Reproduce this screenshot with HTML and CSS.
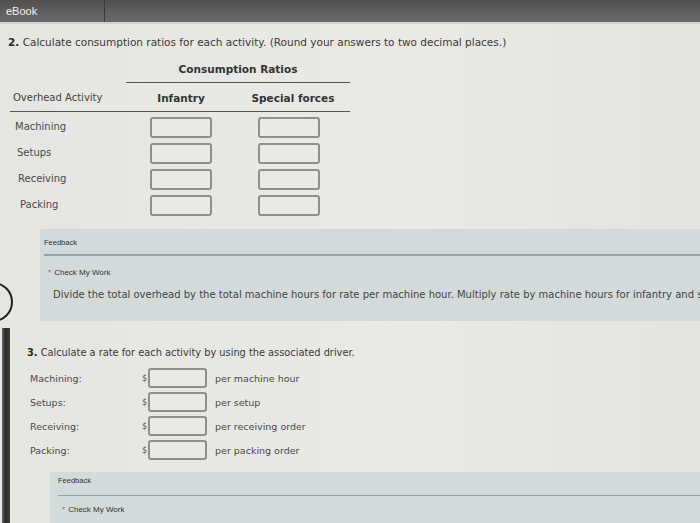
FILE: index.html
```html
<!DOCTYPE html>
<html lang="en">
<head>
    <meta charset="UTF-8">
    <title>eBook</title>
    <link rel="stylesheet" href="styles.css">
</head>
<body>
<div class="topbar">
    <div class="tab">eBook</div>
</div>

<div class="page">
    <p class="question"><b>2.</b> Calculate consumption ratios for each activity. (Round your answers to two decimal places.)</p>

    <div class="ratios-head">
        <div class="group-head">Consumption Ratios</div>
        <div class="col-head first">Overhead Activity</div>
        <div class="col-head">Infantry</div>
        <div class="col-head">Special forces</div>
    </div>

    <div class="ratios-body">
        <div class="activity">Machining</div>
        <div class="cell"><input type="text" class="box"></div>
        <div class="cell"><input type="text" class="box"></div>

        <div class="activity">Setups</div>
        <div class="cell"><input type="text" class="box"></div>
        <div class="cell"><input type="text" class="box"></div>

        <div class="activity">Receiving</div>
        <div class="cell"><input type="text" class="box"></div>
        <div class="cell"><input type="text" class="box"></div>

        <div class="activity">Packing</div>
        <div class="cell"><input type="text" class="box"></div>
        <div class="cell"><input type="text" class="box"></div>
    </div>

    <div class="feedback first-fb">
        <div class="fb-title">Feedback</div>
        <div class="fb-check"><span class="arrow">&#9660;</span> Check My Work</div>
        <p class="fb-text">Divide the total overhead by the total machine hours for rate per machine hour. Multiply rate by machine hours for infantry and special forces.</p>
    </div>

    <p class="question q3"><b>3.</b> Calculate a rate for each activity by using the associated driver.</p>

    <div class="rates">
        <div class="rate-label">Machining:</div>
        <div class="money">$<input type="text" class="box small"></div>
        <div class="unit">per machine hour</div>

        <div class="rate-label">Setups:</div>
        <div class="money">$<input type="text" class="box small"></div>
        <div class="unit">per setup</div>

        <div class="rate-label">Receiving:</div>
        <div class="money">$<input type="text" class="box small"></div>
        <div class="unit">per receiving order</div>

        <div class="rate-label">Packing:</div>
        <div class="money">$<input type="text" class="box small"></div>
        <div class="unit">per packing order</div>
    </div>

    <div class="feedback second-fb">
        <div class="fb-title">Feedback</div>
        <div class="fb-check"><span class="arrow">&#9660;</span> Check My Work</div>
    </div>
</div>

<div class="ring"></div>
<div class="bezel"></div>
</body>
</html>
```

FILE: styles.css
```css
body {
    margin: 0;
    height: 523px;
    overflow: hidden;
    background: linear-gradient(to right, #e5e5e1, #e9e9e5 60%, #e3e3df);
    font-family: "DejaVu Sans", Verdana, sans-serif;
    color: #3f3f3f;
    position: relative;
}

.topbar {
    height: 22px;
    background: linear-gradient(#505050, #6a6a6a);
    border-bottom: 2px solid #d2d2d0;
    display: flex;
}
.tab {
    width: 98px;
    padding-left: 6px;
    border-right: 1px solid #3a3a3a;
    color: #f2f2f2;
    font-family: "Liberation Sans", Arial, sans-serif;
    font-size: 11px;
    line-height: 22px;
}

.page {
    padding-top: 10px;
}

.question {
    margin: 0 0 0 8px;
    font-size: 10.5px;
    line-height: 16px;
    color: #3a3a3a;
}
.question b {
    color: #2a2a2a;
}

/* table of ratios */
.ratios-head {
    margin: 7px 0 0 10px;
    width: 340px;
    display: grid;
    grid-template-columns: 116px 110px 114px;
    grid-template-rows: 26px 29px;
}
.group-head {
    grid-column: 2 / 4;
    border-bottom: 1px solid #555;
    text-align: center;
    font-weight: bold;
    font-size: 10.5px;
    line-height: 24px;
    color: #333;
}
.col-head {
    border-bottom: 1px solid #555;
    text-align: center;
    font-weight: bold;
    font-size: 10.5px;
    line-height: 30px;
    color: #333;
}
.col-head.first {
    text-align: left;
    padding-left: 3px;
    font-weight: normal;
    font-size: 10px;
    color: #444;
}

.ratios-body {
    margin: 2px 0 0 10px;
    display: grid;
    grid-template-columns: 116px 110px 106px;
    grid-auto-rows: 26px;
}
.activity {
    padding-left: 5px;
    font-size: 10px;
    line-height: 26px;
    color: #4a4a4a;
}
.activity:nth-child(4) { padding-left: 7px; }
.activity:nth-child(7) { padding-left: 8px; }
.activity:nth-child(10) { padding-left: 10px; }
.cell {
    display: flex;
    align-items: center;
    justify-content: center;
}
.box {
    width: 62px;
    height: 21px;
    box-sizing: border-box;
    border: 2px solid #8f8f8f;
    border-radius: 3px;
    background: #e9e9e6;
    padding: 0;
}

/* feedback panels */
.feedback {
    background: #d3dad9;
    box-sizing: border-box;
    overflow: hidden;
}
.first-fb {
    margin: 11px 0 0 40px;
    height: 92px;
    padding: 8px 0 0 4px;
}
.fb-title {
    font-family: "Liberation Sans", Arial, sans-serif;
    font-size: 7.5px;
    line-height: 12px;
    color: #333;
    padding-bottom: 5px;
    border-bottom: 2px solid #9aa0a0;
}
.fb-check {
    font-family: "Liberation Sans", Arial, sans-serif;
    font-size: 8px;
    line-height: 12px;
    color: #333;
    margin-top: 9px;
    padding-left: 3px;
}
.arrow {
    font-size: 5px;
    color: #8a8a8a;
    vertical-align: 2px;
}
.fb-text {
    margin: 9px 0 0 9px;
    white-space: nowrap;
    font-size: 10px;
    line-height: 14px;
    color: #444;
}

.q3 {
    margin: 24px 0 0 27px;
    font-size: 9.8px;
}

.rates {
    margin: 5px 0 0 30px;
    display: grid;
    grid-template-columns: 112px 73px auto;
    grid-auto-rows: 24px;
    align-items: center;
}
.rate-label {
    font-size: 9.5px;
    color: #4a4a4a;
}
.money {
    display: flex;
    align-items: center;
    font-size: 8px;
    color: #555;
}
.box.small {
    width: 59px;
    height: 20px;
    margin-left: 1px;
}
.unit {
    font-size: 9.5px;
    color: #4a4a4a;
}

.second-fb {
    margin: 10px 0 0 50px;
    height: 60px;
    padding: 3px 0 0 8px;
}
.second-fb .fb-title {
    padding-bottom: 8px;
    border-bottom-width: 1px;
}
.second-fb .fb-check {
    margin-top: 6px;
}

/* photo artefacts lying over the page */
.ring {
    position: absolute;
    left: -27px;
    top: 282px;
    width: 36px;
    height: 36px;
    border: 2px solid #222;
    border-radius: 50%;
}
.bezel {
    position: absolute;
    left: 2px;
    top: 328px;
    bottom: 0;
    width: 8px;
    background: linear-gradient(to right, #6a6a6a, #2a2a2a 40%, #3c3c3c);
}
```
